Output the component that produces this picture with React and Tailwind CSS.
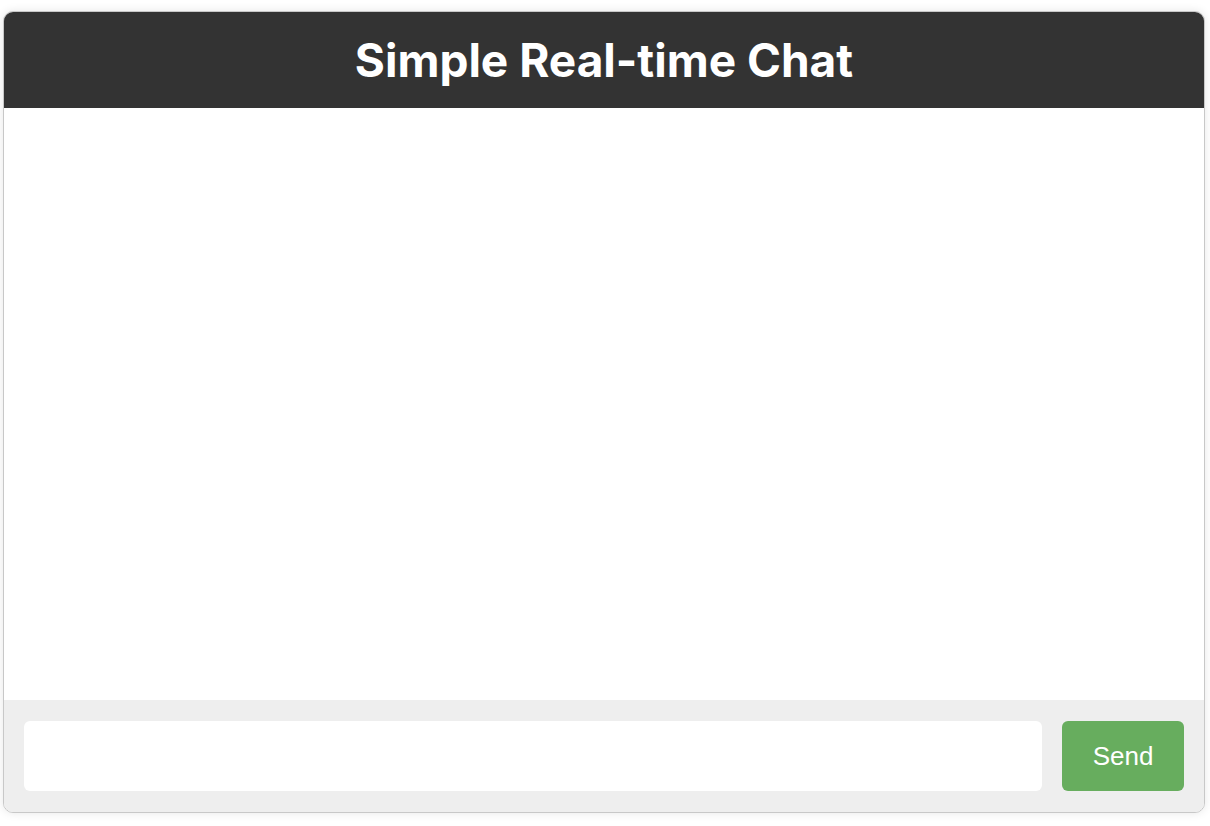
export default function App() {
  return (
    <div className="w-[1210px] h-[826px] bg-white pt-[11px] pl-[3px]">
      <div className="w-[1202px] h-[802px] flex flex-col rounded-[10px] border border-[#c8c8c8] overflow-hidden shadow-[0_0_10px_rgba(0,0,0,0.1)] bg-white">
        <header className="h-[96px] shrink-0 bg-[#333333] flex items-center justify-center">
          <h1 className="text-white font-bold text-[46px] leading-none font-['Inter',sans-serif]">
            Simple Real-time Chat
          </h1>
        </header>
        <div className="flex-1 bg-white" />
        <div className="h-[112px] shrink-0 bg-[#eeeeee] flex items-center gap-[20px] px-[20px]">
          <input
            type="text"
            className="flex-1 h-[70px] rounded-[6px] bg-white outline-none px-3 text-[20px] font-['Liberation_Sans',sans-serif]"
          />
          <button className="w-[122px] h-[70px] rounded-[6px] bg-[#67ad5e] text-white text-[26px] font-['Liberation_Sans',Arial,sans-serif]">
            Send
          </button>
        </div>
      </div>
    </div>
  )
}
